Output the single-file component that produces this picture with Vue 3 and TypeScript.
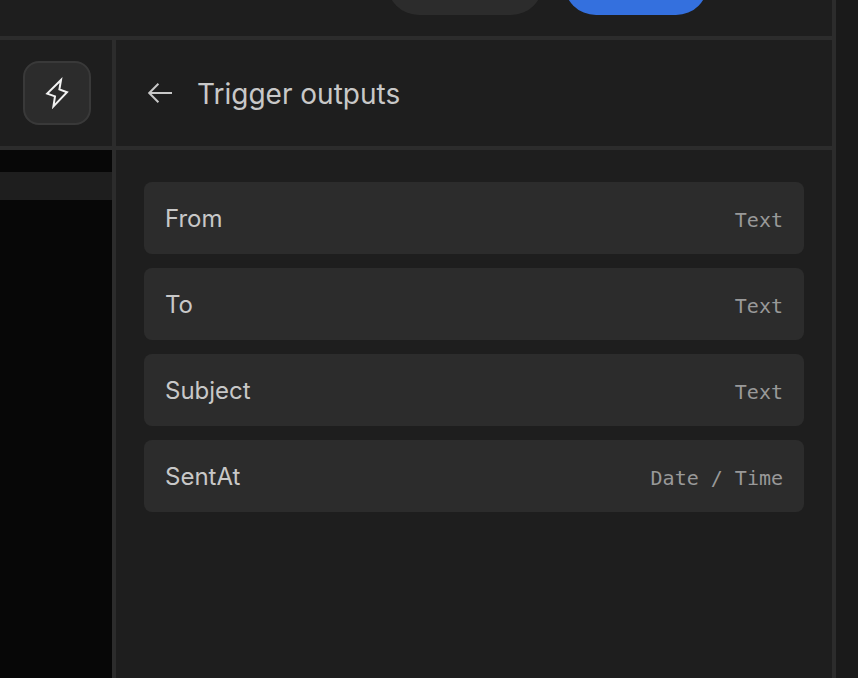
<script setup lang="ts">
interface Output {
  name: string
  type: string
}

const outputs: Output[] = [
  { name: 'From', type: 'Text' },
  { name: 'To', type: 'Text' },
  { name: 'Subject', type: 'Text' },
  { name: 'SentAt', type: 'Date / Time' },
]
</script>

<template>
  <div class="shell">
    <main class="workspace">
      <header class="topbar">
        <button class="pill" type="button" aria-label="Secondary action"></button>
        <button class="pill pill-primary" type="button" aria-label="Primary action"></button>
      </header>
      <div class="body">
        <nav class="rail">
          <div class="rail-head">
            <button class="trigger" type="button" aria-label="Trigger">
              <svg width="32" height="32" viewBox="0 0 32 32" aria-hidden="true">
                <path d="M20 3 18.4 12.4 26 15.2 12.4 29.4 14 19.4 6.2 16.6Z" />
              </svg>
            </button>
          </div>
          <div class="canvas">
            <div class="band"></div>
          </div>
        </nav>
        <section class="panel">
          <div class="panel-head">
            <button class="back" type="button" aria-label="Back">
              <svg width="28" height="24" viewBox="0 0 28 24" aria-hidden="true">
                <path d="M26 12H4M12.4 2.8 3.2 12 12.4 21.2" />
              </svg>
            </button>
            <h1>Trigger outputs</h1>
          </div>
          <ul class="outputs">
            <li v-for="output in outputs" :key="output.name">
              <span class="name">{{ output.name }}</span>
              <span class="type">{{ output.type }}</span>
            </li>
          </ul>
        </section>
      </div>
    </main>
    <aside class="gutter"></aside>
  </div>
</template>

<style>
body {
  margin: 0;
  background: #1e1e1e;
}
</style>

<style scoped>
.shell {
  display: flex;
  min-height: 100vh;
  box-sizing: border-box;
  background: #1e1e1e;
  color: #c8c8c8;
  font-family: Inter, "Liberation Sans", sans-serif;
}

button {
  padding: 0;
  border: 0;
  background: none;
  color: inherit;
  cursor: pointer;
}

svg {
  display: block;
  fill: none;
  stroke: currentColor;
  stroke-width: 2;
}

.workspace {
  display: flex;
  flex: 1;
  flex-direction: column;
  min-width: 0;
}

.topbar {
  display: flex;
  justify-content: flex-end;
  align-items: flex-end;
  gap: 21px;
  height: 40px;
  box-sizing: border-box;
  padding: 0 124px 21px 0;
  border-bottom: 4px solid #2c2c2c;
  overflow: hidden;
}

.pill {
  flex: none;
  width: 156px;
  height: 64px;
  border-radius: 32px;
  background: #2c2c2c;
}

.pill-primary {
  width: 144px;
  background: #3470de;
}

.body {
  display: flex;
  flex: 1;
}

.rail {
  display: flex;
  flex: none;
  flex-direction: column;
  width: 112px;
  border-right: 4px solid #2c2c2c;
}

.rail-head,
.panel-head {
  display: flex;
  align-items: center;
  height: 110px;
  box-sizing: border-box;
  border-bottom: 4px solid #2c2c2c;
}

.rail-head {
  padding-left: 23px;
}

.trigger {
  display: grid;
  place-items: center;
  width: 68px;
  height: 64px;
  border: 2px solid #393939;
  border-radius: 16px;
  background: #2c2c2c;
  color: #f2f2f2;
}

.canvas {
  flex: 1;
  padding-top: 22px;
  background: #070707;
}

.band {
  height: 28px;
  background: #1e1e1e;
}

.panel {
  flex: 1;
  min-width: 0;
}

.panel-head {
  gap: 23px;
  padding-left: 30px;
}

h1 {
  margin: 0;
  padding-top: 2px;
  font-size: 28px;
  font-weight: 400;
  line-height: 36px;
}

.outputs {
  display: flex;
  flex-direction: column;
  gap: 14px;
  margin: 0;
  padding: 32px 28px;
  list-style: none;
}

.outputs li {
  display: flex;
  justify-content: space-between;
  align-items: baseline;
  padding: 21px 21px 19px;
  border-radius: 8px;
  background: #2c2c2c;
}

.name {
  font-size: 24px;
  line-height: 32px;
}

.type {
  color: #999999;
  font-family: "DejaVu Sans Mono", monospace;
  font-size: 20px;
  line-height: 24px;
}

.gutter {
  flex: none;
  width: 22px;
  border-left: 4px solid #2c2c2c;
  background: #1a1a1a;
}
</style>
